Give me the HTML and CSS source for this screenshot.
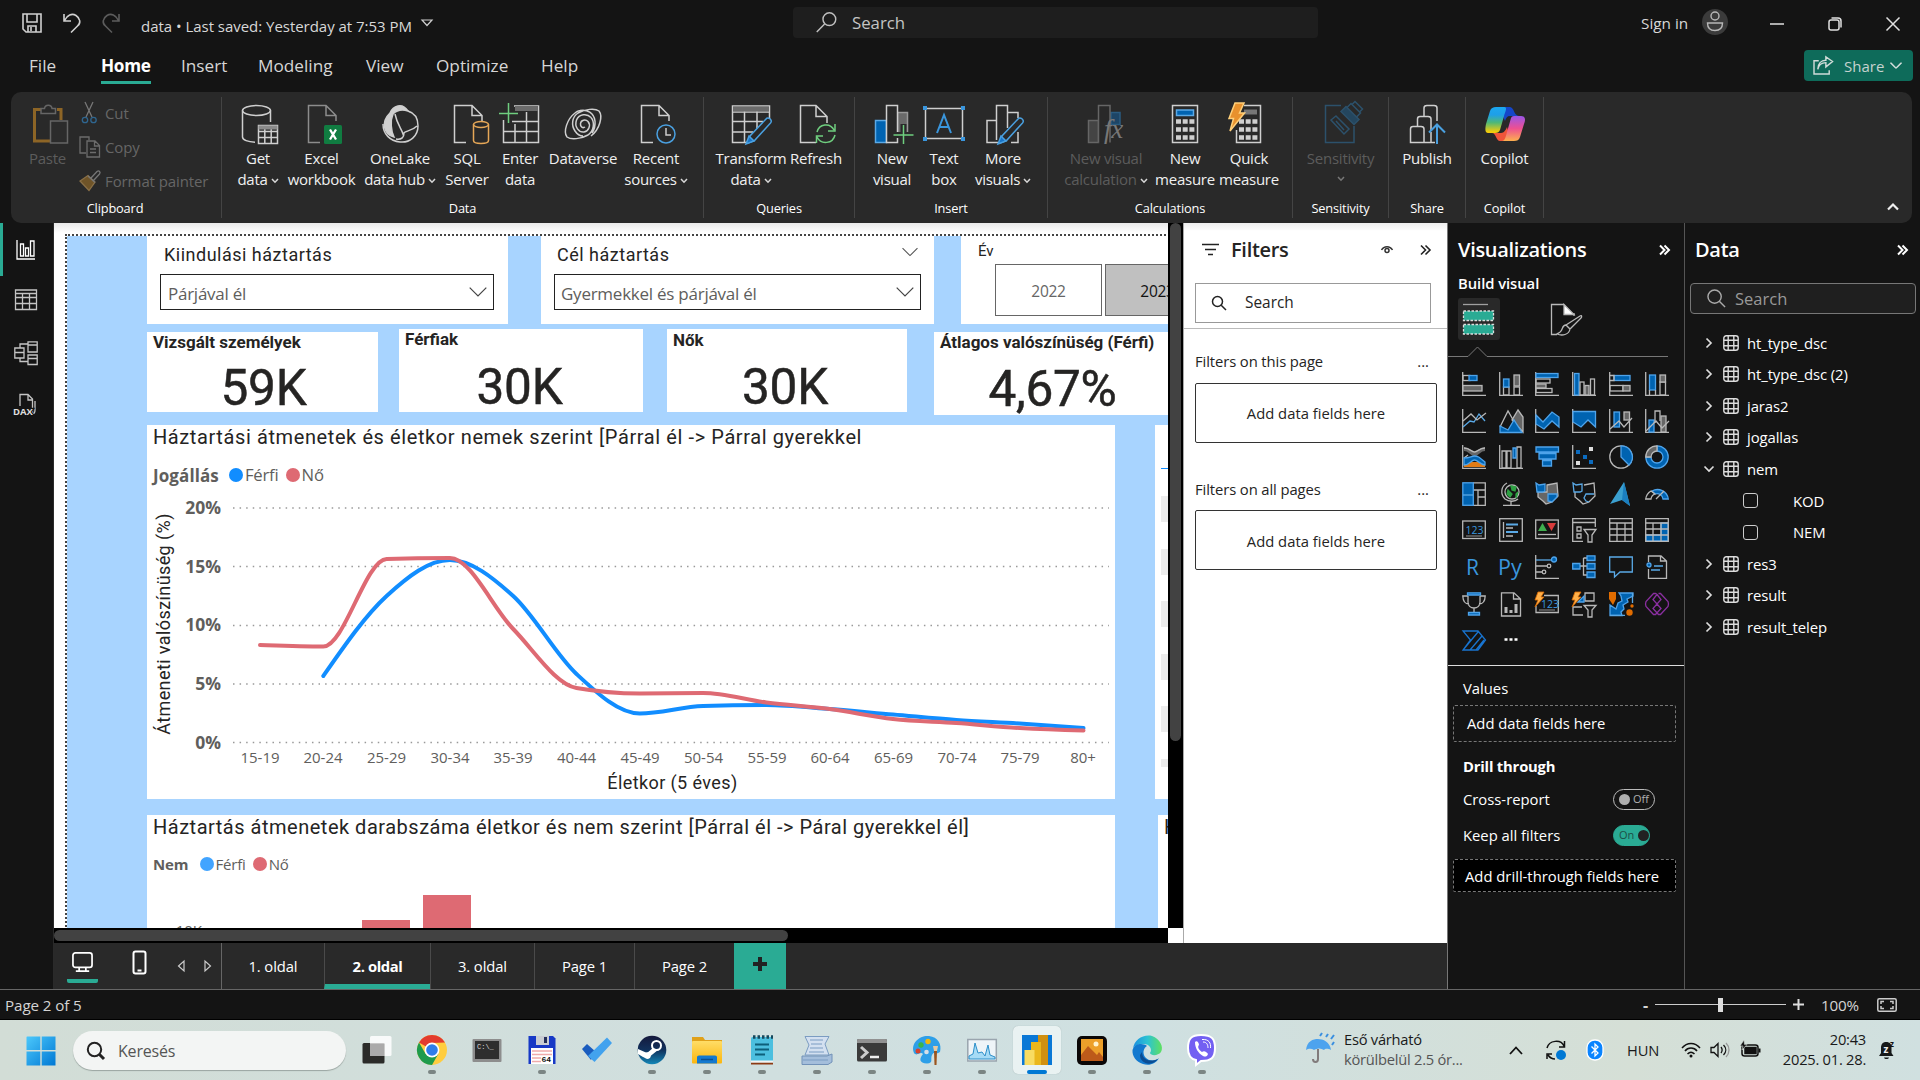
FILE: index.html
```html
<!DOCTYPE html>
<html lang="en">
<head>
<meta charset="utf-8">
<title>data</title>
<link rel="stylesheet" href="styles.css">
</head>
<body>
<svg class="defs" aria-hidden="true">
  <defs>
    <linearGradient id="win" x1="0" y1="0" x2="1" y2="1"><stop offset="0" stop-color="#4cc8fb"/><stop offset="1" stop-color="#0078d4"/></linearGradient>
    <linearGradient id="cpA" x1="0" y1="0" x2="0" y2="1"><stop offset="0" stop-color="#1ba7f0"/><stop offset=".3" stop-color="#1e9fe8"/><stop offset=".6" stop-color="#4fb877"/><stop offset=".95" stop-color="#f2cc0c"/></linearGradient>
    <linearGradient id="cpB" x1="0" y1="0" x2="0" y2="1"><stop offset="0" stop-color="#9a55e8"/><stop offset=".5" stop-color="#ee5091"/><stop offset="1" stop-color="#fdb04e"/></linearGradient>
    <linearGradient id="edge" x1="0" y1="0" x2="1" y2="0"><stop offset="0" stop-color="#1b8fe0"/><stop offset=".5" stop-color="#2cc3d2"/><stop offset="1" stop-color="#5fe060"/></linearGradient>
    <linearGradient id="steam" x1="0" y1="0" x2="0" y2="1"><stop offset="0" stop-color="#15193c"/><stop offset=".5" stop-color="#11315c"/><stop offset="1" stop-color="#1387b8"/></linearGradient>
    <linearGradient id="fold" x1="0" y1="0" x2="0" y2="1"><stop offset="0" stop-color="#ffdd67"/><stop offset="1" stop-color="#fbb60e"/></linearGradient>
    <symbol id="tbl" viewBox="0 0 16 16"><rect x=".8" y=".8" width="14.4" height="14.4" rx="2.5"/><path d="M5.2 .8V15.2M10.8 .8V15.2M.8 5.2H15.2M.8 10.8H15.2"/></symbol>
    <symbol id="chev" viewBox="0 0 8 14"><path d="M1.5 2.5L6 7L1.5 11.5"/></symbol>
    <symbol id="more" viewBox="0 0 12 12"><path d="M1 1.5L5.5 6L1 10.5M5.5 1.5L10 6L5.5 10.5"/></symbol>
    <symbol id="down" viewBox="0 0 18 10"><path d="M.7 .7L9 9L17.3 .7"/></symbol>
    <symbol id="mini" viewBox="0 0 8 6"><path d="M1 1L4 4.2L7 1"/></symbol>
    <symbol id="page" viewBox="0 0 40 40"><path d="M17 38.500H5.500V1.500H23L33 11.500V17M23 1.500V11.500H33"/></symbol>
  </defs>
</svg>

<header class="titlebar">
  <svg class="ti save" viewBox="0 0 20 20"><path d="M1 1H19V19H4L1 16ZM5 1V9H15V1M6 19V13H14V19M9 14V18"/></svg>
  <svg class="ti undo" viewBox="0 0 18 20"><path d="M1 1V8H8M1.500 7.500C4 2 9 0 13 2.500C17.500 5.500 18 10 14.500 13L8 19.500"/></svg>
  <svg class="ti redo" viewBox="0 0 18 20"><path d="M17 1V8H10M16.500 7.500C14 2 9 0 5 2.500C.5 5.500 0 10 3.500 13L10 19.500"/></svg>
  <span class="doc">data • Last saved: Yesterday at 7:53 PM</span>
  <svg class="ti tri" viewBox="0 0 12 8"><path d="M1 1H11L6 6.500Z"/></svg>
  <div class="topsearch"><svg viewBox="0 0 22 22"><circle cx="14" cy="7.500" r="6.700"/><path d="M9 12.500L.8 21"/></svg><span>Search</span></div>
  <span class="signin">Sign in</span>
  <svg class="avatar" viewBox="0 0 26 26"><circle class="bg" cx="13" cy="13" r="13"/><circle cx="13" cy="7" r="4"/><path d="M5.500 14H20.500C20.500 19.500 17.500 21.500 13 21.500S5.500 19.500 5.500 14Z"/></svg>
  <svg class="win" viewBox="0 0 14 14"><path d="M0 7H14"/></svg>
  <svg class="win w2" viewBox="0 0 14 14"><rect x="1" y="3" width="10" height="10" rx="2"/><path d="M3.500 1H10C12 1 13 2 13 4V10.500"/></svg>
  <svg class="win w3" viewBox="0 0 14 14"><path d="M.5 .5L13.500 13.500M13.500 .5L.5 13.500"/></svg>
</header>

<nav class="menubar">
  <span class="m m1">File</span><span class="m m2 on">Home</span><span class="m m3">Insert</span><span class="m m4">Modeling</span><span class="m m5">View</span><span class="m m6">Optimize</span><span class="m m7">Help</span>
  <div class="sharebtn"><svg viewBox="0 0 22 20"><path d="M6 5H1V19H17V15M5 14C6 9 9 7 13.500 7V11.500L20.500 5.800L13.500 1V4.500C8.500 4.500 5 8 5 14Z"/></svg><span>Share</span><svg class="dn" viewBox="0 0 18 10"><use href="#down"/></svg></div>
</nav>

<section class="ribbon">
  <div class="grp g-clip">
    <div class="clip">
      <div class="item dim"><svg class="ic" viewBox="0 0 40 40"><path d="M12 5.500H5.500V37H22M28 5.500H32V16" stroke="#8d6526" stroke-width="3"/><path d="M12 9.500V4.500H15.500C16 0 22.500 0 23 4.500H26.500V9.500Z" fill="#292929"/><rect x="21.500" y="17" width="17" height="22" fill="#2c2c2c"/></svg><span>Paste</span></div>
      <div class="cliplist">
        <div><svg viewBox="0 0 22 22"><path d="M6 0L13 15M14 0L7 15" stroke="#777"/><circle cx="6" cy="18" r="2.700" stroke="#2f6690"/><circle cx="14.500" cy="18" r="2.700" stroke="#2f6690"/></svg>Cut</div>
        <div><svg viewBox="0 0 22 22"><path d="M7 17H1V1H10V4M8 5H16L20.500 9.500V21H8ZM15.500 5V10H20.500M11 13H17M11 16.500H17"/></svg>Copy</div>
        <div><svg viewBox="0 0 22 22"><path d="M1 11L10 20.500L16 12L9 5.500Z" fill="#6f5428" stroke="#8a7047"/><path d="M9 6L16 12.500M12 8L18 1.500C20 0 22 2 20.500 4L14.500 10.500" stroke="#777"/></svg>Format painter</div>
      </div>
    </div>
    <div class="gl">Clipboard</div>
  </div>

  <div class="grp g-data">
    <div class="items">
      <div class="item"><svg class="ic" viewBox="0 0 40 40"><ellipse cx="18.500" cy="6.500" rx="14" ry="5"/><path d="M4.500 6.500V33C4.500 36 10 38 17 38.200M32.500 6.500V18"/><path d="M20.500 21.500H39.500V39.500H20.500ZM20.500 27.500H39.500M20.500 33.500H39.500M26.800 24V39.500M33.200 24V39.500"/><path d="M20.500 23.500H39.500" stroke-width="4" stroke="#8a8a8a"/></svg><span>Get</span><span>data<svg class="mc"><use href="#mini"/></svg></span></div>
      <div class="item"><svg class="ic gr nudge" viewBox="0 0 40 40"><use href="#page"/><rect x="21" y="21" width="18" height="19" rx="1.500" fill="#107c41" stroke="none"/><path d="M27 25.500L33 35.500M33 25.500L27 35.500" stroke="#fff" stroke-width="2.300"/></svg><span>Excel</span><span>workbook</span></div>
      <div class="item"><svg class="ic" viewBox="0 0 40 40"><path d="M10 9C13 2 22-2 28 7C22 5 17 6 13 10C10 17 11 27 14 33C4 31 .5 18 10 9Z" fill="#d0d0d0"/><path d="M28 7C35 9 38 15 38 22C38 32 30 39 20 38C10 37 3 30 3 20M15 10C17 20 21 24 23 30C25 26 31 28 37 22M16 35C22 36 24 33 24 29"/></svg><span>OneLake</span><span>data hub<svg class="mc"><use href="#mini"/></svg></span></div>
      <div class="item"><svg class="ic nudge" viewBox="0 0 40 40"><use href="#page"/><g stroke="#e6a757"><ellipse cx="32" cy="20.500" rx="7.500" ry="3"/><path d="M24.500 20.500V36.500C24.500 40.500 39.500 40.500 39.500 36.500V20.500"/></g></svg><span>SQL</span><span>Server</span></div>
      <div class="item"><svg class="ic" viewBox="0 0 40 40"><path d="M3.500 16V38.500H38.500V2H14M3.500 27.500H38.500M12 17.500H38.500M15 20V38.500M26.500 8V38.500"/><path d="M15 4.500H38" stroke="#6b6b6b" stroke-width="5"/><path d="M8.500-1V19M-1 9.500H18" stroke="#6fce7f"/></svg><span>Enter</span><span>data</span></div>
      <div class="item"><svg class="ic" viewBox="0 0 40 40"><path d="M28 13.500C24 9 16 10 13.500 16C11 23 16 28.500 21 28C26 27 28 21 25 17.500C22.500 15 18 16 17.500 19.500C17 23 20 24.500 22 23"/><path d="M28 13.500C32 18 31 27 25 31C18 35 8 36 4 33C0 28 4 15 12 9C14 7 17 6.500 17 6.500C24 5 31 9 32 17C32.500 22 31 26 29 29M12 27C8 21 9 13 15 9C22 5 32 4 36 7C40 12 37 25 28 32M12 27C14 30 17 32 20 32"/></svg><span>Dataverse</span></div>
      <div class="item"><svg class="ic" viewBox="0 0 40 40"><use href="#page"/><g stroke="#4aa0e0"><circle cx="30" cy="30" r="9" fill="#292929"/><path d="M30 24V31H35" stroke="#ccc"/></g></svg><span>Recent</span><span>sources<svg class="mc"><use href="#mini"/></svg></span></div>
    </div>
    <div class="gl">Data</div>
  </div>

  <div class="grp g-query">
    <div class="items">
      <div class="item"><svg class="ic" viewBox="0 0 40 40"><path d="M17 38.500H1.500V2H38.500V16M1.500 17.500H32M1.500 28H22M13.500 7V38.500M26 7V25M2 8H38"/><path d="M2 5H38" stroke="#6b6b6b" stroke-width="5"/><path d="M17 39L19 32L35 15C37 12 42 16 39.500 19L23.500 36.500Z" stroke="#4aa0e0" fill="#292929"/><path d="M15 40L18 32L23 37Z" fill="#1874c8" stroke="#4aa0e0"/></svg><span>Transform</span><span>data<svg class="mc"><use href="#mini"/></svg></span></div>
      <div class="item"><svg class="ic nudge" viewBox="0 0 40 40"><path d="M18 38.500H2.500V1.500H18L29 12.500V19M18 1.500V12.500H29"/><g stroke="#6fce7f"><path d="M19 28C21 20 32 18 36 26M37 20V27H30M37 31C35 40 23 41 19 33M18.500 39V32H25"/></g></svg><span>Refresh</span></div>
    </div>
    <div class="gl">Queries</div>
  </div>

  <div class="grp g-insert">
    <div class="items">
      <div class="item"><svg class="ic" viewBox="0 0 40 40"><rect x="3.500" y="16.500" width="11" height="22" fill="#0063b1" stroke="#5aa9e6"/><rect x="25.500" y="8.500" width="10" height="22" fill="#6a6a6a" stroke="#999"/><path d="M14.500 38.500V1.500H25.500V38.500Z" fill="#292929"/><path d="M31.500 20V42M20 31H43" stroke="#292929" stroke-width="6"/><path d="M31.500 21V40M21.500 31H41.500" stroke="#6fce7f"/></svg><span>New</span><span>visual</span></div>
      <div class="item"><svg class="ic" viewBox="0 0 40 40"><rect x="1.500" y="4.500" width="37" height="30"/><g fill="#3a96dd" stroke="none"><path d="M-1 2H3V6H-1ZM37 2H41V6H37ZM-1 33H3V37H-1ZM37 33H41V37H37Z"/></g><path d="M13 29L20 11L27 29M15.500 23H24.500" stroke="#3a96dd" stroke-width="2"/></svg><span>Text</span><span>box</span></div>
      <div class="item"><svg class="ic" viewBox="0 0 40 40"><path d="M13 16.500H4V38.500H15M13.500 36V1.500H24.500V24M24.500 8.500H35V14M28 38.500H35V28"/><path d="M17 39L19 32L35 15C37 12 42 16 39.500 19L23.500 36.500Z" stroke="#4aa0e0" fill="#292929"/><path d="M15 40L18 32L23 37Z" fill="#1874c8" stroke="#4aa0e0"/></svg><span>More</span><span>visuals<svg class="mc"><use href="#mini"/></svg></span></div>
    </div>
    <div class="gl">Insert</div>
  </div>

  <div class="grp g-calc">
    <div class="items">
      <div class="item dim"><svg class="ic" viewBox="0 0 40 40"><rect x="2.500" y="16.500" width="10" height="22" fill="#444"/><rect x="25" y="8.500" width="9" height="12" fill="#1d4566" stroke="#2a5b80"/><path d="M12.500 38.500V1.500H24V38.500" fill="#292929"/><text x="18" y="34" class="fx">fx</text></svg><span>New visual</span><span>calculation<svg class="mc"><use href="#mini"/></svg></span></div>
      <div class="item"><svg class="ic" viewBox="0 0 40 40"><rect x="7.500" y="1.500" width="25" height="37"/><rect x="11.500" y="6" width="17" height="5.500" fill="#0063b1" stroke="#5aa9e6"/><path d="M11 17.500H29.500M11 25.500H29.500M11 33.500H29.500" stroke-width="4.500" stroke-dasharray="5 1.700"/></svg><span>New</span><span>measure</span></div>
      <div class="item"><svg class="ic back" viewBox="0 0 40 40"><path d="M17 1.500H33.500V38.500H9.500V26"/><path d="M17 8H30" stroke="#777" stroke-width="5"/><path d="M12 17.500H31M12 25.500H31M12 33.500H31" stroke-width="4.500" stroke-dasharray="5 1.700"/><path d="M8-1H17L12.500 9H17.500L3 27L6.500 14.500H2Z" fill="#e8912d" stroke="#ffd07a"/></svg><span>Quick</span><span>measure</span></div>
    </div>
    <div class="gl">Calculations</div>
  </div>

  <div class="grp g-sens">
    <div class="items">
      <div class="item dim"><svg class="ic" viewBox="0 0 40 40"><g stroke="#2c516b"><path d="M20 1.500H4.500V38.500H33V22"/><path d="M20 7.500L25 2.500L38 15.500L33 20.500Z" fill="#24465e"/><path d="M26 3.500L30-.5L39.500 9L35.500 13M31 .5L34-2.500L41.500 5L38.500 8"/><path d="M15 12L28 25L23 30L10 16ZM15 17L23 26"/></g></svg><span>Sensitivity</span><span><svg class="mc solo"><use href="#mini"/></svg></span></div>
    </div>
    <div class="gl">Sensitivity</div>
  </div>
  <div class="grp g-share">
    <div class="items">
      <div class="item"><svg class="ic" viewBox="0 0 40 40"><path d="M30 17V4Q30 1.500 27 1.500H20Q17 1.500 17 4V12M24 26V15Q24 12.500 21 12.500H13Q10.500 12.500 10.500 15V22M3.500 38.500V25Q3.500 22.500 6 22.500H14Q17 22.500 17 25V38.500ZM17 38.500H28M24 28V38"/><path d="M30 40V21M22 28.500L30 20.500L38 28.500" stroke="#4aa0e0" stroke-width="2"/></svg><span>Publish</span></div>
    </div>
    <div class="gl">Share</div>
  </div>
  <div class="grp g-cop">
    <div class="items">
      <div class="item"><svg class="ic" viewBox="0 0 40 40"><g stroke="none"><path d="M14 3H25C29 3 29 12 34 12H25C22 12 21 14 20 17Z" fill="#1546c8"/><path d="M7 3H19C23 3 20 8 19 12L15 26C14 28 13 29 10 29H3C0 29 0 25 1 20L5 7C6 4 8 3 11 3Z" fill="url(#cpA)"/><path d="M26 37H15C11 37 11 29 7 29H15C18 29 20 28 22 23Z" fill="#f0553a"/><path d="M29 37H17C20 37 21 32 22 28L26 14C27 12 28 12 31 12H36C40 12 41 15 39 20L35 33C34 36 32 37 29 37Z" fill="url(#cpB)"/></g></svg><span>Copilot</span></div>
    </div>
    <div class="gl">Copilot</div>
  </div>
  <div class="collapse"><svg viewBox="0 0 12 8"><path d="M1 6.500L6 1.500L11 6.500"/></svg></div>
</section>

<main class="work">
  <aside class="rail">
    <div class="r on"><svg viewBox="0 0 24 24"><path d="M3 2V21H21M6.500 6V18H9.500V6ZM11.500 10V18H14.500V10ZM16.500 3V18H20V3Z"/></svg></div>
    <div class="r"><svg viewBox="0 0 24 24"><path d="M1.500 2H22.500V21.500H1.500ZM1.500 9.500H22.500M1.500 15.500H22.500M8.500 6V21.500M15.500 6V21.500M1.500 5.500H22.500"/></svg></div>
    <div class="r"><svg viewBox="0 0 24 24"><path d="M14 0.800H23.200V11H14ZM14 4H23.200M14 14H23.200V23.500H14ZM14 17.500H23.200M.8 7H10V17H.8ZM.8 11.500H10M6 7V3H14M6 17V20.500H14"/></svg></div>
    <div class="r"><svg viewBox="0 0 24 24"><path d="M6 13V1.500H14L18.500 6V20M14 1.500V7H18.500M21 8V17C21 20 20 21 18 21"/><text x="-1" y="21.500" class="dax">DAX</text></svg></div>
  </aside>

  <div class="center">
    <div class="stage">
      <div class="canvaswrap">
        <div class="canvas">
          <div class="paper"></div>
          <div class="v s1"><h4>Kiindulási háztartás</h4><div class="dd"><span>Párjával él</span><svg><use href="#down"/></svg></div></div>
          <div class="v s2"><h4>Cél háztartás <svg><use href="#down"/></svg></h4><div class="dd"><span>Gyermekkel és párjával él</span><svg><use href="#down"/></svg></div></div>
          <div class="v s3"><h5>Év</h5><div class="yrs"><span>2022</span><span class="sel">2023</span></div></div>
          <div class="v k k1"><b>Vizsgált személyek</b><i>59K</i></div>
          <div class="v k k2"><b>Férfiak</b><i>30K</i></div>
          <div class="v k k3"><b>Nők</b><i>30K</i></div>
          <div class="v k k4"><b>Átlagos valószínüség (Férfi)</b><i>4,67%</i></div>
          <div class="v c1">
            <h3>Háztartási átmenetek és életkor nemek szerint [Párral él -&gt; Párral gyerekkel</h3>
            <div class="leg"><b>Jogállás</b><em class="bl"></em>Férfi<em class="rd"></em>Nő</div>
            <svg class="plot" viewBox="147 490 968 309">
              <g class="gridl"><path d="M233 508H1109M233 566.500H1109M233 625.500H1109M233 684H1109M233 742.500H1109"/></g>
              <g class="yl"><text x="221" y="514">20%</text><text x="221" y="573">15%</text><text x="221" y="631">10%</text><text x="221" y="690">5%</text><text x="221" y="749">0%</text></g>
              <g class="xl"><text x="260" y="763">15-19</text><text x="323" y="763">20-24</text><text x="386.500" y="763">25-29</text><text x="450" y="763">30-34</text><text x="513" y="763">35-39</text><text x="576.500" y="763">40-44</text><text x="640" y="763">45-49</text><text x="703.500" y="763">50-54</text><text x="767" y="763">55-59</text><text x="830" y="763">60-64</text><text x="893.500" y="763">65-69</text><text x="957" y="763">70-74</text><text x="1020" y="763">75-79</text><text x="1083" y="763">80+</text></g>
              <text class="at" x="672.500" y="789">Életkor (5 éves)</text>
              <text class="at av" transform="translate(170 624) rotate(-90)">Átmeneti valószínüség (%)</text>
              <path class="ln" stroke="#118dff" d="M323.300,676C344.400,645.700 365.500,615.300 386.600,596C407.700,576.700 428.800,560 449.900,560C471,560 492.100,577 513.200,596C534.300,615 555.400,654.400 576.500,674C597.600,693.600 618.700,713.500 639.800,713.500C660.900,713.500 682,706.700 703.100,706C724.200,705.300 745.300,705 766.400,705C787.500,705 808.600,707.400 829.700,709C850.800,710.600 871.900,712.700 893,714.500C914.100,716.300 935.200,718.500 956.300,720C977.400,721.500 998.500,722.200 1019.600,723.500C1040.700,724.800 1061.800,726.400 1083.500,728"/>
              <path class="ln" stroke="#de6a73" d="M260,645C281.100,645.700 302.200,646.500 323.300,646.500C344.400,646.500 365.500,559.700 386.600,559C407.700,558.300 428.800,558 449.900,558C471,558 492.100,607.300 513.200,629C534.300,650.700 555.400,684.300 576.500,688C597.600,691.700 618.700,693.500 639.800,693.500C660.900,693.500 682,693 703.100,693C724.200,693 745.300,699.800 766.400,702.500C787.500,705.200 808.600,706.300 829.700,709C850.800,711.700 871.900,716.700 893,719C914.100,721.300 935.200,721.500 956.300,723C977.400,724.500 998.500,726.800 1019.600,728C1040.700,729.200 1061.800,729.900 1083.500,730.500"/>
            </svg>
          </div>
          <div class="v c2">
            <h3>Háztartás átmenetek darabszáma életkor és nem szerint [Párral él -&gt; Páral gyerekkel él]</h3>
            <div class="leg"><b>Nem</b><em class="bl2"></em>Férfi<em class="rd"></em>Nő</div>
            <svg class="plot2" viewBox="147 880 968 48"><rect x="362" y="920" width="48" height="10"/><rect x="423" y="895" width="48" height="35"/><text x="202" y="936">10K</text></svg>
          </div>
          <div class="v t1"><u></u><s></s><s></s><s></s><s></s><s></s><s class="last"></s></div>
          <div class="v t2"><h3>H</h3></div>
        </div>
        <div class="vbar"><div></div></div>
        <div class="hbar"><div></div></div>
        <div class="corner"></div>
      </div>

      <aside class="filters">
        <div class="fh"><svg class="fi" viewBox="0 0 17 13"><path d="M0 1.500H17M3 6.500H14M6 11.500H11"/></svg><h2>Filters</h2>
          <svg class="eye" viewBox="0 0 12 10"><path d="M.5 5C3 .5 9 .5 11.500 5" /><circle cx="6" cy="5.500" r="2"/></svg>
          <svg class="mr" viewBox="0 0 12 12"><use href="#more"/></svg></div>
        <div class="fs"><svg viewBox="0 0 16 16"><circle cx="6.500" cy="6.500" r="5"/><path d="M10.200 10.200L15 15"/></svg>Search</div>
        <div class="fsec"><span>Filters on this page</span><span class="dots">...</span></div>
        <div class="drop">Add data fields here</div>
        <div class="fsec second"><span>Filters on all pages</span><span class="dots">...</span></div>
        <div class="drop">Add data fields here</div>
      </aside>
    </div>
    <div class="pages">
      <div class="dev"><svg class="mon" viewBox="0 0 22 22"><rect x="1" y="1" width="20" height="15" rx="2.500"/><path d="M7.500 16V20M14.500 16V20M4 20H18"/></svg></div>
      <div class="phone"><svg viewBox="0 0 16 26"><rect x="1.500" y="1.500" width="12" height="22" rx="2"/><path d="M5.500 20.500H9.500"/></svg></div>
      <div class="arrows"><svg viewBox="0 0 8 12"><path d="M7 1V11L1.500 6Z"/></svg><svg viewBox="0 0 8 12"><path d="M1 1V11L6.500 6Z"/></svg></div>
      <div class="tab first">1. oldal</div><div class="tab on">2. oldal</div><div class="tab">3. oldal</div><div class="tab p1">Page 1</div><div class="tab p1">Page 2</div>
      <div class="plus"><svg viewBox="0 0 16 16"><path d="M8 1V15M1 8H15"/></svg></div>
    </div>
  </div>

  <aside class="viz">
    <div class="ph"><h2>Visualizations</h2><svg class="mr" viewBox="0 0 12 12"><use href="#more"/></svg></div>
    <h6>Build visual</h6>
    <div class="modes">
      <div class="mode on"><svg viewBox="0 0 42 42"><path d="M5 6.500H30" stroke="#a0a0a0"/><rect x="5.500" y="13" width="30" height="9.500" fill="#2aab94" stroke="#ddd" stroke-dasharray="2.500 1.500"/><rect x="5.500" y="26.500" width="30" height="9.500" fill="#2aab94" stroke="#ddd" stroke-dasharray="2.500 1.500"/></svg></div>
      <div class="mode"><svg viewBox="0 0 42 42"><path d="M11 36.500H5.500V6.500H18M28 15V18"/><path d="M18 6.500L28 16.500H18Z" fill="#fff"/><path d="M20 27L34 18C36 17 36 19 35 20L24 31ZM20 27C16 27 17 31 15 33C14 35 12 35 11 36C16 38 23 37 24 31"/></svg></div>
    </div>
    <svg class="notch" viewBox="0 0 236 12"><path d="M0 10.500H20L29.500 1L39 10.500H220"/></svg>
    <div class="grid">
      <svg viewBox="0 0 24 24"><path d="M.7 0V23.300H24"/><rect class="g" x="1" y="13.500" width="19" height="5.500"/><rect x="1" y="3.500" width="7" height="5"/><rect class="b" x="7" y="3.500" width="8" height="5"/></svg>
      <svg viewBox="0 0 24 24"><path d="M.7 0V23.300H24"/><rect x="4.500" y="15" width="5.500" height="8"/><rect class="b" x="4.500" y="7" width="5.500" height="8"/><rect x="15" y="15" width="5.500" height="8"/><rect class="g" x="15" y="3" width="5.500" height="11"/></svg>
      <svg viewBox="0 0 24 24"><path d="M.7 0V23.300H24"/><rect class="b" x="1" y="1.500" width="22" height="4"/><rect x="1" y="7" width="14" height="4"/><rect class="g" x="1" y="12" width="10" height="4"/><rect x="1" y="16.500" width="16" height="4"/></svg>
      <svg viewBox="0 0 24 24"><path d="M.7 0V23.300H24"/><rect class="b" x="2.500" y="1.500" width="4.500" height="21.500"/><rect x="8" y="10" width="4" height="13"/><rect class="g" x="13" y="13.500" width="4" height="9.500"/><rect x="18.500" y="7" width="4" height="16"/></svg>
      <svg viewBox="0 0 24 24"><path d="M.7 0V23.300H24"/><rect x="1" y="13.500" width="13" height="5.500"/><rect class="g" x="14" y="13.500" width="7" height="5.500"/><rect class="b" x="5" y="3.500" width="16" height="5"/><path d="M1 3.500H5V8.500H1"/></svg>
      <svg viewBox="0 0 24 24"><path d="M.7 0V23.300H24"/><rect class="b" x="4.500" y="3" width="6" height="15"/><path d="M4.500 18V23M10.500 18V23"/><rect x="15" y="10" width="5.500" height="13"/><rect class="g" x="15" y="3" width="5.500" height="7"/></svg>

      <svg viewBox="0 0 24 24"><path d="M.7 0V23.300H24"/><path class="bs" d="M1 18L8 12L12 13L17 5L23 12"/><path d="M1 12L9 5L15 11L24 4"/></svg>
      <svg viewBox="0 0 24 24"><path class="g" d="M19 1L24 8V23L13 11Z"/><path d="M1 18L9 2L17 16"/><path class="b" d="M1 23.500V17L9 21L15 11L23 23.500Z"/></svg>
      <svg viewBox="0 0 24 24"><path d="M.7 0V23.300H24"/><path class="b" d="M1 6L8 13L17 3L24 8V18L17 12L9 20L1 15Z"/></svg>
      <svg viewBox="0 0 24 24"><path d="M.7 0V23.300H24"/><path class="b" d="M1 2.500H23.500V18L16 11L9 18L1 13Z"/></svg>
      <svg viewBox="0 0 24 24"><path d="M.7 0V23.300H24"/><rect class="b" x="5" y="3" width="5.500" height="15"/><rect class="g" x="15" y="3" width="5.500" height="8"/><path d="M20.500 11V23M1 20L10 12L15 18L23 9"/></svg>
      <svg viewBox="0 0 24 24"><path d="M.7 0V23.300H24"/><rect class="b" x="4" y="11" width="5" height="12"/><path d="M10 14V2H15V12"/><rect class="g" x="16" y="7" width="5" height="16"/><path d="M1 22L11 12L17 19L24 12"/></svg>

      <svg viewBox="0 0 24 24"><path d="M.7 0V23.300H24"/><path d="M2 17H23V22H2Z" fill="#e07b16" stroke="none"/><path class="gs" d="M2 4C8 4 9 9 12.500 9S17 4 23 4" stroke-width="4"/><path d="M2 3C8 3 9 7 12.500 7S17 3 23 3M2 13L6 10"/><path class="b" d="M2 13C8 13 9 11 12.500 11S17 12 23 17V20C17 19 16 15 12.500 15S8 20 2 20Z"/></svg>
      <svg viewBox="0 0 24 24"><path d="M.7 0V23.300H24M3 6H7V23H3ZM8 6H12V23H8ZM18 2H22V23H18Z"/><path class="b" d="M14 3H17V13H14Z"/></svg>
      <svg viewBox="0 0 24 24"><path class="b" d="M1 2H23.500V7H1ZM4 8.500H21V14H4ZM7.500 15.500H16.500V21H7.500Z"/></svg>
      <svg viewBox="0 0 24 24"><path d="M.7 0V23.300H24"/><path d="M17 2H21V6H17ZM4 16H8V20H4Z" fill="#ddd" stroke="none"/><path d="M4 5H8V9H4ZM11 10H15V14H11ZM17 15H21V19H17Z" fill="#0b6bbf" stroke="none"/></svg>
      <svg viewBox="0 0 24 24"><circle cx="12" cy="12" r="11.200"/><path class="b" d="M12 .8A11.200 11.200 0 0 1 20 20L12 12Z"/></svg>
      <svg viewBox="0 0 24 24"><path class="b" d="M12 .8A11.200 11.200 0 1 1 .8 12H6A6 6 0 1 0 12 6Z"/><path class="g" d="M.8 12A11.200 11.200 0 0 1 12 .8V6A6 6 0 0 0 6 12Z"/></svg>

      <svg viewBox="0 0 24 24"><path d="M11 .8H23.300V23.300H11M11 8H23M16 8V23M16 15H23"/><rect class="b" x=".8" y=".8" width="10.500" height="22.500"/><path class="bs" d="M1 13H11"/></svg>
      <svg viewBox="0 0 24 24"><circle cx="13" cy="10" r="7"/><path d="M8 1C2 4 1 12 6 17C10 20 16 20 19 17M12 19V23M4 23.300H21"/><path d="M12 4L17 5L16 9L13 8ZM9 8L13 12L11 15L8 12ZM17 12L19 10L17 16Z" fill="#2ea043" stroke="#2ea043"/></svg>
      <svg viewBox="0 0 24 24"><path class="g" d="M12 3L22 1L23 14L17 20L11 22L8 19L3 15V10H12Z"/><path class="b" d="M1 1L4 3L10 2V9L8 10H2ZM13 12H22V15L17 20L13 19Z"/></svg>
      <svg viewBox="0 0 24 24"><path d="M12 3L22 1L23 14L17 20L11 22L8 19L3 15V10"/><path class="bs" d="M1 1L4 3L10 2V9L8 10H2ZM22 12H14L12 16L14 19L17 20"/></svg>
      <svg viewBox="0 0 24 24"><path d="M15 0L21 24L13 18L1 22Z" fill="#3ba0d0" stroke="none"/><path d="M15 0L21 24L13 18Z" fill="#1b7fc0" stroke="none"/></svg>
      <svg viewBox="0 0 24 24"><path class="b" d="M7 9A11 11 0 0 1 23.300 17H18A6 6 0 0 0 10 12Z"/><path d="M.7 17A11 11 0 0 1 6 9L10 12A6 6 0 0 0 6 17ZM11 17L19 9"/></svg>

      <svg viewBox="0 0 24 24"><rect x=".7" y="3" width="22.600" height="17.500"/><text x="3.500" y="15.500" class="n">123</text><path d="M4 18H20" stroke="#777"/></svg>
      <svg viewBox="0 0 24 24"><rect x=".7" y=".7" width="22.600" height="22.600"/><path d="M4.500 4V20M7 10H14M7 18H14" /><path class="bs" d="M7 6.500H19M7 14H19" stroke-width="2"/></svg>
      <svg viewBox="0 0 24 24"><rect x=".7" y="2" width="22.600" height="18.500"/><path d="M3 13L7.500 5L12 13Z" fill="#3fae4e" stroke="none"/><path d="M12 5H21L16.500 13Z" fill="#d83b3b" stroke="none"/><path d="M3 16.500H21"/></svg>
      <svg viewBox="0 0 24 24"><path d="M11 23.300H.7V.7H23.300V9M.7 4.500H23M5 9H9V13H5ZM5 16H9V20H5ZM12 11.500H24L20 17V24H16V17Z"/></svg>
      <svg viewBox="0 0 24 24"><path d="M.7 .7H23.300V23.300H.7ZM.7 5H23M.7 11H23M.7 17H23M8 5V23M16 5V23"/></svg>
      <svg viewBox="0 0 24 24"><path class="b" d="M16 5H23V23H1V17H16Z"/><path d="M.7 .7H23.300V23.300H.7ZM.7 5H23M.7 11H23M.7 17H23M8 5V23M16 5V23"/></svg>

      <svg viewBox="0 0 24 24"><text x="4" y="20" class="py">R</text></svg>
      <svg viewBox="0 0 24 24"><text x="-1" y="19.500" class="py big">Py</text></svg>
      <svg viewBox="0 0 24 24"><path d="M.7 0V23.300H24M1 11H12M1 17H7"/><circle cx="14" cy="11" r="1.800"/><circle cx="9" cy="17" r="1.800"/><path class="bs" d="M1 5H17"/><circle class="b" cx="19" cy="4.500" r="2.500"/></svg>
      <svg viewBox="0 0 24 24"><path d="M8 11H15M11.500 3V20H15M11.500 3H15"/><path class="b" d="M.7 8.500H8V14H.7ZM15 .8H23V5.500H15ZM15 8.500H23V14H15ZM15 17H23V22.500H15Z"/></svg>
      <svg viewBox="0 0 24 24"><path class="bs" d="M.7 2H23.300V17H11L5.500 22V17H.7Z"/></svg>
      <svg viewBox="0 0 24 24"><path d="M3.500 7V1H16L21.500 6V23.300H3.500V14M15.500 1V6H21"/><path class="bs" d="M9 11H18M6 15H15"/><circle class="b" cx="4" cy="10" r="2"/></svg>

      <svg viewBox="0 0 24 24"><path d="M6 4V10C6 18 18 18 18 10V4M6 4H.8C1 9 3 12 7 12M18 4H23.200C23 9 21 12 17 12M12 16V20"/><path class="b" d="M5.500 .8H18.500V3H5.500ZM6.500 20.500H17.500V23H6.500Z"/></svg>
      <svg viewBox="0 0 24 24"><path d="M2.500 .8H15L21.500 7V24H2.500ZM14.500 1V7H21"/><path d="M7 21V15M12 21V18M17 21V12" stroke-width="3"/></svg>
      <svg viewBox="0 0 24 24"><path d="M9 3.500H23.300V20.500H1V14"/><text x="6" y="16" class="n">123</text><path d="M4 18H20" stroke="#777"/><path class="o" d="M3 0H9L6 5H9L0 15L3 8H0Z"/></svg>
      <svg viewBox="0 0 24 24"><path d="M13 1H22V9H13ZM11 23H1V15H10M12 13.500H24L20 18V25H16V18Z"/><path class="b" d="M6 10L12 4V10Z"/><path class="o" d="M3 0H9L6 5H9L0 15L3 8H0Z"/></svg>
      <svg viewBox="0 0 24 24"><path class="b" d="M10 1H24V4L18 7L19 10L14 13L15 17L12 20L13 23.500H1V13L7 17L9 11L13 9L12 4Z"/><path class="bs" d="M23.500 1V11M1 23.300H16"/><path d="M0 0H7V7L4 13L0 7Z" fill="#e06c00" stroke="none"/><circle cx="20.500" cy="20.500" r="3.200" fill="#e06c00" stroke="none"/><circle cx="23" cy="14" r="1.700" fill="#e06c00" stroke="none"/></svg>
      <svg viewBox="0 0 24 24"><path d="M8.500 1.500L1 9.500Q0 12 1 14.500L8.500 22.500H10.500L16 16.500L8 7.500L12 2.500L10.500 1.500ZM13.500 1.500H15.500L23 9.500Q24 12 23 14.500L15.500 22.500H13.500L8 16.500L16 7.500L12 2.500" stroke="#8a2fa0"/></svg>

      <svg viewBox="0 0 24 24"><path d="M1 3H16L23.500 12L16 22H1L8.500 12ZM1 22L16 4M8 22L20 8M14 22L22 12" stroke="#1874d0"/></svg>
      <svg viewBox="0 0 24 24"><path d="M5.500 11.500H8.500M10.500 11.500H13.500M15.500 11.500H18.500" stroke="#fff" stroke-width="2.600"/></svg>
    </div>
    <div class="wells">
      <p class="wl">Values</p>
      <div class="well w-a">Add data fields here</div>
      <p class="wl dt">Drill through</p>
      <div class="tg"><span>Cross-report</span><div class="tog"><i></i>Off</div></div>
      <div class="tg t2"><span>Keep all filters</span><div class="tog on">On<i></i></div></div>
      <div class="well w-b">Add drill-through fields here</div>
    </div>
  </aside>

  <aside class="data">
    <div class="ph"><h2>Data</h2><svg class="mr" viewBox="0 0 12 12"><use href="#more"/></svg></div>
    <div class="ds"><svg viewBox="0 0 20 20"><circle cx="8" cy="8" r="7"/><path d="M13 13L19 19"/></svg>Search</div>
    <ul>
      <li><svg class="ch"><use href="#chev"/></svg><svg class="tb"><use href="#tbl"/></svg>ht_type_dsc</li>
      <li><svg class="ch"><use href="#chev"/></svg><svg class="tb"><use href="#tbl"/></svg>ht_type_dsc (2)</li>
      <li><svg class="ch"><use href="#chev"/></svg><svg class="tb"><use href="#tbl"/></svg>jaras2</li>
      <li><svg class="ch"><use href="#chev"/></svg><svg class="tb"><use href="#tbl"/></svg>jogallas</li>
      <li><svg class="ch open"><use href="#chev"/></svg><svg class="tb"><use href="#tbl"/></svg>nem</li>
      <li class="f"><i></i>KOD</li>
      <li class="f"><i></i>NEM</li>
      <li><svg class="ch"><use href="#chev"/></svg><svg class="tb"><use href="#tbl"/></svg>res3</li>
      <li><svg class="ch"><use href="#chev"/></svg><svg class="tb"><use href="#tbl"/></svg>result</li>
      <li><svg class="ch"><use href="#chev"/></svg><svg class="tb"><use href="#tbl"/></svg>result_telep</li>
    </ul>
  </aside>
</main>

<footer class="status">
  <span class="pg">Page 2 of 5</span>
  <span class="zm">-</span><div class="slider"><i></i></div><svg class="zp" viewBox="0 0 11 11"><path d="M5.500 0V11M0 5.500H11"/></svg><span class="pct">100%</span>
  <svg class="fit" viewBox="0 0 20 14"><rect x=".8" y=".8" width="18.400" height="12.400" rx="1.500"/><path d="M4 6V3.500H7M13 3.500H16V6M16 8V10.500H13M7 10.500H4V8"/></svg>
</footer>

<div class="taskbar">
  <svg class="start" viewBox="0 0 30 30"><path fill="url(#win)" d="M1 .5H14.300V14H.5V1ZM15.700 .5H29.500V14H15.700ZM.5 15.500H14.300V29.500H.5ZM15.700 15.500H29.500V29.500H15.700Z"/></svg>
  <div class="tsearch"><svg viewBox="0 0 20 20"><circle cx="8.500" cy="8.500" r="6.700"/><path d="M13.500 13.500L18 18" stroke-width="3"/></svg>Keresés</div>
  <div class="apps">
    <div class="app"><svg viewBox="0 0 30 30"><rect x=".5" y="8" width="22" height="20.500" rx="1.500" fill="#2b2b29"/><rect x="8" y="1" width="21.500" height="20" rx="1.500" fill="#fff" opacity=".85"/><path d="M8 8.500H22.500V21H8Z" fill="#aaa"/></svg></div>
    <div class="app run"><svg viewBox="0 0 30 30"><circle cx="15" cy="15" r="15" fill="#ffcd40"/><path d="M15 15L2 7.500A15 15 0 0 1 28 7.500L15 8Z" fill="#e33b2e"/><path d="M2 7.500A15 15 0 0 0 15 30L21.500 18.500L15 22L8.500 18.700Z" fill="#1e9b4c"/><circle cx="15" cy="15" r="7.400" fill="#fff"/><circle cx="15" cy="15" r="5.800" fill="#2f7de9"/></svg></div>
    <div class="app"><svg viewBox="0 0 30 30"><rect x=".5" y="4" width="29" height="23" rx="1" fill="#8d8d8d"/><rect x="3" y="6" width="24" height="18" fill="#2e2e2e"/><text x="5" y="13.500" class="cmd">C:\_</text></svg></div>
    <div class="app run"><svg viewBox="0 0 30 30"><path d="M1.500 1H26L28.500 3.500V29H1.500Z" fill="#1739c6"/><path d="M9 1H22V10H9Z" fill="#c9cdd3"/><path d="M17 2H20V8H17Z" fill="#24305a"/><rect x="4" y="13" width="22" height="16" fill="#fff"/><path d="M5 16H25M5 19.500H25M5 23H14M5 26.500H14" stroke="#efaaaa" stroke-width="1.500"/><text x="14.500" y="27" class="n64">64</text></svg></div>
    <div class="app"><svg viewBox="0 0 30 30"><path d="M0 14L5 9L14 17L9 25Z" fill="#1a5cbe"/><path d="M6 21L25 2.500L30 8L12.500 27Z" fill="#42a2ee"/></svg></div>
    <div class="app run"><svg viewBox="0 0 30 30"><circle cx="15" cy="15" r="14.300" fill="url(#steam)"/><circle cx="19.500" cy="10.500" r="4.500" fill="none" stroke="#fff" stroke-width="2"/><path d="M1 14L10 18L16 13L21 15L13.500 21L11 24L6 22L1 19Z" fill="#fff"/><circle cx="10.500" cy="20.500" r="3.300" fill="#fff"/></svg></div>
    <div class="app run"><svg viewBox="0 0 30 30"><path d="M0 2H11L13 5H30V10H0Z" fill="#e0a11a"/><rect y="6" width="30" height="22.500" rx="1" fill="url(#fold)"/><path d="M5 28.500V22Q5 20.500 7 20.500H23Q25 20.500 25 22V28.500Z" fill="#1479cf"/><path d="M9 24.500H21" stroke="#0a4f91" stroke-width="1.500"/></svg></div>
    <div class="app run"><svg viewBox="0 0 30 30"><rect x="4" y="2" width="22" height="25" rx="1.500" fill="#4cbfdf"/><path d="M4 27.500H26V29.500H4Z" fill="#8c3a14"/><path d="M4 25.500H26V27.500H4Z" fill="#f3f3f3"/><path d="M8 9.500H22M8 14.500H22M8 19.500H18" stroke="#0d5f7a" stroke-width="2"/><path d="M6 2H26" stroke="#16485c" stroke-width="3.500" stroke-dasharray="2.500 2"/></svg></div>
    <div class="app run"><svg viewBox="0 0 30 30"><path d="M3 1.500H27L23 9L27 20H3L7 10Z" fill="#d3e0f0" stroke="#7b9cc2"/><path d="M0 21H25L30 19V27L26 29.500H0Z" fill="#a4bedb" stroke="#7292b8"/><path d="M8 5H21M9 9H20M8 13H21M7 17H22M1 25H26" stroke="#7b9cc2"/></svg></div>
    <div class="app run"><svg viewBox="0 0 30 30"><rect x="0" y="4" width="30" height="22.500" rx="1.500" fill="#3a3a3a"/><path d="M1.500 4H28.500Q30 4 30 5.500V8H0V5.500Q0 4 1.500 4Z" fill="#919191"/><path d="M4 12L10 17.500L4 23" fill="none" stroke="#ccc" stroke-width="3"/><path d="M13 22H22" stroke="#eee" stroke-width="2.500"/></svg></div>
    <div class="app run"><svg viewBox="0 0 30 30"><path d="M2 18C-2 8 8 0 17 1C26 2 30 9 28 17C24 20 22 16 20 20C18 24 22 28 15 28.500C7 28 7 24 11 19C8 16 5 22 2 18Z" fill="#2e9fe8"/><circle cx="9" cy="10" r="2.700" fill="#3ab54a"/><circle cx="16" cy="6.500" r="2.700" fill="#f2b70c"/><circle cx="6" cy="16" r="2.500" fill="#d8402c"/><circle cx="14.500" cy="17" r="2.300" fill="#d6dfe8"/><path d="M21 11H26L25 16H22Z" fill="#e7c9a0"/><path d="M22 16H25L24.500 30H22.500Z" fill="#9a541e"/></svg></div>
    <div class="app run"><svg viewBox="0 0 30 30"><rect x=".8" y="4.500" width="28.500" height="21.500" fill="#eef4f8" stroke="#9aa5ae" stroke-width="1.500"/><path d="M2 24V21L6 19L8 8L11 18L15 17L18 21L21 10L23 20L28 22V24Z" fill="#a6dbf6" stroke="#2d8fc9"/></svg></div>
    <div class="app run act"><svg viewBox="0 0 30 30"><rect width="30" height="30" fill="#0a78d6"/><path d="M16 0H26V30H16Z" fill="#d19010"/><path d="M9 7H19V30H9Z" fill="#eab71c"/><path d="M2.500 15H12.500V30H2.500Z" fill="#f8dc62"/></svg></div>
    <div class="app run"><svg viewBox="0 0 30 30"><rect y="1" width="30" height="29" rx="5" fill="#0b0707"/><rect x="4" y="4" width="22" height="22" fill="#eda02a"/><path d="M4 20L11 11L20 20L22 17L26 22V26H4Z" fill="#bd5a1a"/><circle cx="19" cy="9" r="2.500" fill="#fff3cf"/></svg></div>
    <div class="app run"><svg viewBox="0 0 30 30"><path d="M1 14C2 4 12-1 20 1C28 4 32 12 29 17C26 21 19 21 18 18C21 14 17 9 12 9C6 9 2 11 1 14Z" fill="url(#edge)"/><path d="M.5 15C3 8 11 8 15 11C12 13 10 17 13 22C17 27 24 26 27 23C24 29 17 31 11 29C4 27 0 21 .5 15Z" fill="#1279cf"/><path d="M10 17C10 24 17 28 26 24C20 32 8 29 8 20Z" fill="#0b4d93"/></svg></div>
    <div class="app run"><svg viewBox="0 0 30 30"><path d="M14 0C25 0 28 4 28 13C28 23 24 26 14 26L9 30V25C3 24 1 20 1 13C1 4 4 0 14 0Z" fill="#7360f2" stroke="#fff" stroke-width="2"/><path d="M8 7C10 5 12 8 12 10C10 12 12 15 15 17C17 15 20 17 21 19C20 22 18 22 16 21C11 18 8 13 8 7Z" fill="#fff"/><path d="M16 7C20 7 21 10 21 13M15 4.500C22 4 24 8 23.500 13" fill="none" stroke="#fff"/></svg></div>
  </div>
  <div class="weather"><svg viewBox="0 0 30 30"><path d="M0 17C1 8 7 6 12 6S24 9 25 17C21 15 19 16 18 17C15 15 12 15 8 17C5 15 2 16 0 17Z" fill="#4da3ee"/><path d="M12 16V26C12 30 7 30 7 26" fill="none" stroke="#817b7b" stroke-width="2"/><path d="M14 3L16 0M20 4L22 1M25 6L28 2M26 12L28 9" stroke="#3a8fe0" stroke-width="2"/></svg><div><span>Eső várható</span><span class="sub">körülbelül 2.5 ór...</span></div></div>
  <svg class="up" viewBox="0 0 14 9"><path d="M1 8L7 1.500L13 8"/></svg>
  <svg class="sync" viewBox="0 0 20 20"><path d="M1 8C3 0 15-1 18 6M18.500 1V7H13M1 19V14H6M2 15C4 18 6 19 9 19"/><circle cx="15" cy="15" r="5" fill="#0078d4" stroke="none"/></svg>
  <svg class="bt" viewBox="0 0 16 20"><rect width="16" height="20" rx="7.500" fill="#0a84ff"/><path d="M4.500 6.500L11 13L8 16V4L11 7L4.500 13.500"/></svg>
  <span class="hun">HUN</span>
  <svg class="wifi" viewBox="0 0 20 16"><path d="M1 6C6 0 14 0 19 6M4 9C7 5 13 5 16 9M6.500 12C9 9.500 11 9.500 13.500 12"/><circle cx="10" cy="14" r="1.500" fill="#111" stroke="none"/></svg>
  <svg class="snd" viewBox="0 0 20 16"><path d="M1 5.500H4L8 1.500V14.500L4 10.500H1ZM11 5C12.500 7 12.500 9 11 11M13.500 3C16.500 6 16.500 10 13.500 13"/><path d="M16 1C20 5 20 11 16 15" stroke="#999"/></svg>
  <svg class="bat" viewBox="0 0 22 18"><rect x="2" y="5" width="16" height="11" rx="2.500"/><path d="M5 7.500H16V13.500H5Z" fill="#111"/><path d="M19.500 8.500V12.500" stroke-width="2"/><path d="M4 0L0 6H3L2 10L7 4.500H4.500Z" fill="#111" stroke="#d6dfda" stroke-width=".6"/></svg>
  <div class="clock"><span>20:43</span><span>2025. 01. 28.</span></div>
  <svg class="bell" viewBox="0 0 18 20"><path d="M1 16L3 13V8C3 4 5 2 8 2C12 2 13.500 4 13.500 8V13L15.500 16ZM6 17.500H11C10.500 19.500 6.500 19.500 6 17.500Z" fill="#16191a"/><text x="5.500" y="12.500" class="zz">z</text><text x="12" y="6.500" class="zz k">z</text></svg>
</div>
</body>
</html>
```
FILE: styles.css
```css
*{box-sizing:border-box;margin:0;padding:0}
body{width:1920px;height:1080px;overflow:hidden;background:#141414;color:#fff;font:15px/20px "Open Sans","Noto Sans",sans-serif;display:flex;flex-direction:column}
svg{display:block;fill:none;overflow:visible;flex:none}
.defs{width:0;height:0;position:absolute}

/* title bar */
.titlebar{height:45px;display:flex;flex:none;align-items:flex-start;color:#d8d8d8}
.ti{stroke:#d0d0d0;stroke-width:1.600}
.save{width:20px;height:20px;margin:13px 0 0 22px}
.undo{width:18px;height:20px;margin:13px 0 0 21px}
.redo{width:18px;height:20px;margin:13px 0 0 21px;stroke:#5c5c5c}
.doc{margin:16px 0 0 21px;width:272px;white-space:nowrap;font-size:15px;letter-spacing:-.03px}
.tri{width:12px;height:8px;margin:19px 0 0 8px;stroke-width:1.200}
.topsearch{margin:7px 0 0 360px;width:525px;height:31px;border-radius:4px;background:#1e1e1e;display:flex;align-items:center;padding-left:23px;gap:15px;font-size:16.800px;color:#c4c4c4}
.topsearch svg{width:21px;height:21px;stroke:#c0c0c0;stroke-width:1.500}
.signin{margin:13px 0 0 323px;width:48px;white-space:nowrap;font-size:15.300px}
.avatar{width:26px;height:26px;margin:9px 0 0 13px;stroke:#b8b8b8;stroke-width:1.400}
.avatar .bg{fill:#3b3b3b;stroke:none}
.win{width:14px;height:14px;margin:17px 0 0 42px;stroke:#e0e0e0;stroke-width:1.500}
.win.w2{margin-left:44px}
.win.w3{margin-left:44px}

/* menu bar */
.menubar{height:47px;flex:none;display:flex;color:#d6d6d6;font-size:17.200px;line-height:26px}
.m{height:39px;padding-top:8px;white-space:nowrap}
.m1{margin-left:29px;width:72px}
.m2{width:50px;margin-right:30px;color:#fff;font-weight:700;letter-spacing:-.3px;border-bottom:3px solid #2aab94}
.m3{width:77px}.m4{width:108px}.m5{width:70px}.m6{width:105px}.m7{width:60px}
.sharebtn{margin:5px 0 0 1203px;width:109px;height:31px;border-radius:4px;background:#0e6b5a;display:flex;align-items:center;padding-left:9px;font-size:15px;color:#c5d2cf}
.sharebtn svg{width:21px;height:19px;stroke:#d0dcd9;stroke-width:1.500}
.sharebtn span{margin:0 7px 0 10px;width:39px}
.sharebtn .dn{width:12px;height:7px;stroke-width:2.200}

/* ribbon */
.ribbon{height:131px;flex:none;margin:0 8px 0 11px;background:#292929;border-radius:10px;display:flex;padding:5px 0}
.grp{border-right:1px solid #444;display:flex;flex-direction:column;height:121px}
.items{display:grid;height:98px}
.item{display:flex;flex-direction:column;align-items:center;padding-top:7px;color:#f0f0f0;white-space:nowrap;letter-spacing:-.25px}
.item span{display:block;height:21px;line-height:22px}
.ic{width:40px;height:40px;margin-bottom:3px;stroke:#cfcfcf;stroke-width:1.500}
.ic.nudge{margin-left:3px}
.ic.back{margin-right:5px}
.ic.gr{stroke:#8c8c8c}
.mc{width:8px;height:6px;display:inline-block;stroke:#d8d8d8;stroke-width:1.500;margin-left:3px;vertical-align:1px}
.mc.solo{vertical-align:3px;margin:0;stroke:#777}
.dim{color:#5c5c5c}.dim .ic{stroke:#666}
.fx{font:italic 27px "Liberation Serif",serif;fill:#777;stroke:none}
.gl{height:20px;text-align:center;font-size:12.800px;letter-spacing:-.15px;line-height:26px}
.g-clip{width:211px}.g-data{width:482px}.g-query{width:151px}.g-insert{width:193px}.g-calc{width:245px}.g-sens{width:96px}.g-share{width:77px}.g-cop{width:78px}
.g-data .items{grid-template-columns:66px 61px 96px 38px 68px 58px 88px;padding-left:3px}
.g-query .items{grid-template-columns:94px 36px}
.g-insert .items{grid-template-columns:74px 30px 88px}
.g-calc .items{grid-template-columns:116px 42px 86px}
.g-sens .items,.g-share .items,.g-cop .items{grid-template-columns:100%}
.clip{height:98px;display:flex}
.clip .item{width:73px}
.clip .ic{margin-left:3px}
.g-clip .gl{padding-right:2px}
.cliplist{color:#666;letter-spacing:-.1px}
.cliplist div{height:34px;display:flex;align-items:center;white-space:nowrap;margin-left:-5px;gap:4px}
.cliplist div:first-child{margin-top:-1px}
.cliplist svg{width:22px;height:22px;stroke:#6c6c6c;stroke-width:1.300}
.collapse{flex:1;display:flex;justify-content:flex-end;align-items:flex-end;padding:0 13px 7px 0}
.collapse svg{width:12px;height:8px;stroke:#eee;stroke-width:2.200}

/* workspace */
.work{height:767px;flex:none;display:flex;border-bottom:1px solid #666}
.rail{width:54px;border-right:1px solid #2a2a2a;flex:none}
.r{height:52.500px;display:flex;align-items:center;padding-left:14px}
.r.on{box-shadow:inset 3px 0 #2aab94;height:53px;margin-bottom:-2px}
.r svg{width:24px;height:24px;stroke:#c4c4c4;stroke-width:1.300}
.r.on svg{stroke:#fff}
.dax{font:700 9.500px "Open Sans",sans-serif;fill:#ddd;stroke:#141414;stroke-width:2.500px;paint-order:stroke}
.center{width:1393px;flex:none;display:flex;flex-direction:column}
.stage{height:720px;display:flex}
.canvaswrap{width:1129px;display:grid;grid-template-columns:1114px 15px;grid-template-rows:705px 15px;flex:none}
.vbar{grid-column:2;grid-row:1;background:#000;padding:0 2px}
.vbar div{height:518px;background:#424242;border-radius:6px}
.hbar{grid-column:1;grid-row:2;background:#000;padding:2px 0}
.hbar div{width:734px;height:11px;background:#424242;border-radius:6px}
.corner{background:#fff;grid-column:2;grid-row:2}

/* report page: visuals sit freely on the page */
.canvas{grid-column:1;grid-row:1;position:relative;overflow:hidden;background:linear-gradient(#e9e9e9,#fff 10px);color:#252423}
.paper{position:absolute;left:11px;top:11px;width:1300px;height:900px;background:#a8d4ff;border:2px dotted #444;background-clip:padding-box}
.v{position:absolute;background:#fff}
.v h3,.v h4,.v h5,.v b,.v i{font-family:Roboto,"Open Sans",sans-serif;font-weight:400;font-style:normal;white-space:nowrap}
.s1{left:93px;top:13px;width:361px;height:88px;padding:9px 13px}
.s2{left:487px;top:13px;width:393px;height:88px;padding:9px 13px}
.s3{left:907px;top:13px;width:300px;height:88px;padding:7px 0 0 17px}
.v h4{font-size:18px;line-height:20px;padding-left:4px;letter-spacing:.5px;display:flex;justify-content:space-between}
.s2 h4{padding-left:3px}
.s2 h4 svg{width:18px;height:10px;stroke:#555;stroke-width:1.200;margin:2px 2px 0 0;transform:scale(.9)}
.dd{height:36px;margin-top:9px;border:1px solid #222;display:flex;align-items:center;justify-content:space-between;padding:3px 6px 0 7px;font-size:17px;letter-spacing:-.25px;color:#605e5c}
.s1 .dd{width:334px}.s2 .dd{width:367px;padding-left:6px}
.dd svg{width:18px;height:10px;stroke:#444;stroke-width:1.200;margin-top:-3px}
.v h5{font-size:15px;line-height:16px}
.yrs{display:flex;gap:3px;margin:5px 0 0 17px;font-size:15.500px;color:#666}
.yrs span{width:107px;height:52px;line-height:52px;border:1px solid #666;text-align:center;flex:none;letter-spacing:-.3px}
.yrs .sel{background:#c0c0c0;color:#111;padding-right:2px}
.k b{display:block;font-weight:700;font-size:17px;line-height:20px;padding-left:6px;letter-spacing:0}
.k i{display:block;font-size:49.500px;line-height:50px;text-align:center;letter-spacing:-.3px;-webkit-text-stroke:.5px #252423}
.k1{left:93px;top:109px;width:231px;height:80px}.k1 i{padding:11px 0 0 2px}
.k2{left:345px;top:106px;width:244px;height:83px}.k2 i{padding:13px 3px 0 0}
.k3{left:613px;top:106px;width:240px;height:83px}.k3 i{padding:13px 4px 0 0}.k3 b{line-height:22px;height:20px}
.k4{left:880px;top:109px;width:245px;height:83px}.k4 i{padding:12px 8px 0 0}
.c1{left:93px;top:202px;width:968px;height:374px}
.c2{left:93px;top:592px;width:968px;height:200px}
.v h3{font-size:20px;line-height:24px;padding-left:6px;letter-spacing:.6px}
.c2 h3{letter-spacing:.51px}
.leg{display:flex;align-items:center;height:20px;margin-top:16px;padding-left:6px;font-size:16.700px;color:#605e5c;letter-spacing:-.2px}
.leg b{font:700 17px "Open Sans",sans-serif;letter-spacing:.1px;margin-right:10px}
.leg em{width:14px;height:14px;border-radius:50%;margin-right:2px}
.leg .rd{margin-left:7px;background:#de6a73}
.bl{background:#118dff}.bl2{background:#41a4ff}
.c2 .leg{font-size:15px;margin-top:15px}.c2 .leg b{font-size:15px;letter-spacing:-.1px;margin-right:11px}
.plot{width:968px;height:309px;margin-top:5px}
.plot2{width:968px;height:48px;margin-top:6px}
.plot2 rect{fill:#de6a73}
.plot2 text{font-size:15px;fill:#605e5c;text-anchor:end}
.gridl{stroke:#999;stroke-width:1.500;stroke-dasharray:1.500 5.080}
.yl text{font-weight:700;font-size:17.500px;text-anchor:end;fill:#605e5c}
.xl text{font-size:15px;text-anchor:middle;fill:#605e5c}
.at{font-family:Roboto,sans-serif;font-size:18px;text-anchor:middle;fill:#252423;letter-spacing:.4px}
.ln{stroke-width:4;stroke-linecap:round}
.t1{left:1101px;top:202px;width:100px;height:374px;padding:43px 0 0 6px}
.t1 u{display:block;height:1px;margin-bottom:27px;background:#118dff}
.t1 s{display:block;height:26px;margin-bottom:26.600px;background:#ececec}
.t1 .last{height:8px}
.t2{left:1104px;top:592px;width:100px;height:200px}

/* filters pane */
.filters{width:264px;border-left:1px solid #aaa;background:linear-gradient(#eee,#fff 8px);color:#252423;font-size:14.800px}
.fh{display:flex;align-items:center;height:52px;padding:1px 0 0 18px}
.fi{width:17px;height:13px;stroke:#222;stroke-width:1.500}
h2{font-size:20px;font-weight:600;letter-spacing:-.3px;line-height:26px}
.fh h2{margin-left:12px;width:142px}
.eye{width:12px;height:10px;margin:0 27px 0 8px;stroke:#333;stroke-width:1.500}
.mr{width:12px;height:12px;stroke:#222;stroke-width:1.600}
.fs{margin:8px 0 0 11px;width:236px;height:40px;border:1px solid #999;display:flex;align-items:center;font-size:15.400px;padding-left:15px;gap:18px}
.fs svg{width:16px;height:16px;stroke:#222;stroke-width:1.500}
.fsec{display:flex;justify-content:space-between;padding:0 18px 0 11px;height:50px;margin-top:5px;border-top:1px solid #bbb;align-items:flex-end;padding-bottom:7px;letter-spacing:-.1px}
.fsec.second{border:0;height:67px;margin:0;padding-bottom:11px}
.dots{letter-spacing:0}
.drop{width:242px;height:60px;margin:5px 0 0 11px;border:1px solid #333;border-radius:2px;display:flex;align-items:center;justify-content:center}
.fsec.second + .drop{margin-top:0;padding-top:2px}

/* page tabs */
.pages{height:46px;background:#292929;display:flex}
.dev{width:31px;margin-left:13px;height:40px;border-bottom:4px solid #2aab94;padding:9px 0 0 5px;border-radius:0 0 2px 2px}
.mon{width:21px;height:21px;stroke:#fff;stroke-width:1.800}
.phone{margin:7px 0 0 34px;width:16px}.phone svg{width:16px;height:26px;stroke:#fff;stroke-width:2}
.arrows{display:flex;gap:19px;margin:17px 0 0 29px;width:44px}
.arrows svg{width:8px;height:12px;stroke:#ccc;stroke-width:1.200}
.tab{width:104px;border-left:1px solid #4a4a4a;text-align:center;line-height:47px;font-size:14.800px;letter-spacing:-.1px;height:46px}
.tab.first{width:103px;border-color:#666}
.tab.on{width:106px;font-weight:700;letter-spacing:-.4px;border-bottom:5px solid #2aab94}
.tab.p1{width:100px}
.plus{width:52px;background:#2aab94;display:flex;justify-content:center;padding-top:13px}
.plus svg{width:16px;height:16px;stroke:#222;stroke-width:4}

/* visualizations pane */
.viz{width:238px;flex:none;border-left:1px solid #777;border-right:1px solid #555;font-size:14.800px}
.ph{height:52px;display:flex;align-items:center;justify-content:space-between;padding:1px 13px 0 10px}
.viz .mr,.data .mr{stroke:#fff;stroke-width:2}
h6{font-size:14.800px;font-weight:600;padding-left:10px;line-height:16px;letter-spacing:-.05px}
.modes{display:flex;gap:46px;padding:7px 0 0 10px}
.mode{width:42px;height:42px;border-radius:3px}.mode.on{background:#292929}
.mode svg{width:42px;height:42px;stroke:#b8b8b8;stroke-width:1.300}
.notch{width:236px;height:12px;margin-top:6px;stroke:#777}
.grid{display:grid;grid-template-columns:repeat(6,24px);column-gap:12.700px;row-gap:12.600px;padding:14px 0 0 14px}
.grid svg{width:24px;height:24px;stroke:#b8b8b8;stroke-width:1.300}
.b{fill:#0063b1;stroke:#4ea3ea}.bs{stroke:#5aa9e6}.g{fill:#666}.gs{stroke:#666}.o{fill:#ffb04a;stroke:#e06c00;stroke-width:.8}
.n{font-size:10.500px;fill:#3a96dd;stroke:none}
.py{font-size:21px;fill:#3a96dd;stroke:none}.py.big{font-size:21.500px}
.wells{border-top:1px solid #ddd;margin-top:12.700px;padding:12px 0 0 5px}
.wl{padding-left:10px}
.dt{font-weight:700;margin-top:14px;letter-spacing:-.2px}
.well{width:223px;border:1px dashed #777;border-radius:2px;white-space:nowrap}
.w-a{height:37px;margin-top:7px;line-height:34px;padding-left:13px}
.w-b{height:33px;margin-top:13px;line-height:33px;padding-left:11px;background:#000}
.tg{display:flex;margin-top:13px;padding-left:10px;height:21px;align-items:center;white-space:nowrap}
.tg.t2{margin-top:15px}
.tg span{width:150px;flex:none}
.tog{width:42px;height:21px;border:1px solid #bbb;border-radius:11px;display:flex;align-items:center;font-size:11px;color:#b0b0b0;padding-left:5px;gap:3px}
.tog i{width:11px;height:11px;border-radius:50%;background:#b0b0b0}
.tog.on{background:#2aab94;border-color:#2aab94;color:#1d4f46;gap:4px}.tog.on i{background:#222}

/* data pane */
.data{width:235px;flex:none}
.data .ph{padding:1px 11px 0 10px}
.ds{margin:8px 0 0 5px;width:226px;height:31px;border:1px solid #777;border-radius:4px;background:#1f1f1f;color:#999;display:flex;align-items:center;padding-left:16px;gap:9px;font-size:16.500px}
.ds svg{width:19px;height:19px;stroke:#aaa;stroke-width:1.500}
ul{list-style:none;padding-top:13px}
li{height:31.550px;display:flex;align-items:center;padding-left:20px;font-size:14.900px;letter-spacing:-.1px}
.ch{width:8px;height:14px;stroke:#ddd;stroke-width:1.700;margin-right:10px}
.ch.open{transform:rotate(90deg)}
.tb{width:16px;height:16px;stroke:#ddd;stroke-width:1.400;margin-right:8px}
.f i{width:15px;height:15px;border:1.500px solid #ccc;border-radius:3px;margin:0 35px 0 38px}

/* status bar */
.status{height:29px;flex:none;display:flex;align-items:center;color:#d4d4d4;font-size:15.200px}
.pg{margin-left:5px;width:1638px;letter-spacing:-.1px}
.zm{width:12px;font-size:16px;font-weight:700}
.slider{width:131px;height:14px;display:flex;align-items:center;background:linear-gradient(#ccc,#ccc) 0 6px/100% 1px no-repeat}
.slider i{width:5px;height:14px;background:#ddd;margin-left:63px}
.zp{width:11px;height:11px;stroke:#ddd;stroke-width:2;margin-left:7px}
.pct{margin-left:17px;width:56px;letter-spacing:-.2px}
.fit{width:20px;height:14px;stroke:#ccc;stroke-width:1.500}

/* taskbar */
.taskbar{height:61px;flex:none;border-top:1px solid #000;background:linear-gradient(90deg,#d2ddd6,#d0dfdf 40%,#cfe0e1 60%,#d5dfd6 85%,#d0e0e0);display:flex;align-items:flex-start;color:#1a1a1a;font-size:14.700px}
.start{width:30px;height:30px;margin:16px 0 0 26px}
.tsearch{width:273px;height:39px;margin:11px 0 0 17px;border-radius:20px;background:#f3f5f4;box-shadow:0 1px 1px #9aa5a1;display:flex;align-items:center;padding-left:13px;gap:12px;font-size:16px;letter-spacing:-.2px;color:#555}
.tsearch svg{width:20px;height:20px;stroke:#222;stroke-width:2}
.apps{display:flex;margin-left:7px;gap:7px;padding-top:6px}
.app{width:48px;height:48px;padding:9px 9px 0;border-radius:5px;display:flex;flex-direction:column;align-items:center}
.app svg{width:30px;height:30px}
.app.run::after{content:"";width:8px;height:4px;border-radius:2px;background:#7b8583;margin-top:5px;flex:none}
.app.act{background:#e9f2f2;box-shadow:0 0 1px #9aa}
.app.act::after{width:20px;background:#0078d4}
.cmd{font:7px "Liberation Mono",monospace;fill:#ddd}
.n64{font:700 8px "Liberation Mono",monospace;fill:#111}
.weather{display:flex;margin:10px 0 0 80px;width:160px;gap:8px}
.weather svg{width:30px;height:30px;margin-top:3px}
.weather span,.clock span{display:block;height:20px;line-height:19px;white-space:nowrap;letter-spacing:-.25px}
.weather .sub{color:#555}
.up{width:14px;height:9px;margin:26px 0 0 43px;stroke:#111;stroke-width:1.800}
.sync{width:20px;height:20px;margin:20px 0 0 23px;stroke:#111;stroke-width:1.500}
.bt{width:16px;height:20px;margin:20px 0 0 21px;stroke:#fff;stroke-width:1.300}
.hun{margin:20px 0 0 24px;width:32px;letter-spacing:-.2px}
.wifi{width:20px;height:16px;margin:22px 0 0 22px;stroke:#111;stroke-width:1.500}
.snd{width:20px;height:16px;margin:22px 0 0 9px;stroke:#111;stroke-width:1.300}
.bat{width:22px;height:18px;margin:20px 0 0 10px;stroke:#111;stroke-width:1.500}
.clock{margin:10px 0 0 14px;width:90px;text-align:right}
.bell{width:18px;height:20px;margin:20px 0 0 12px}
.zz{font:700 10px "Open Sans",sans-serif;fill:#eee}.zz.k{fill:#111;font-size:8px}
```
